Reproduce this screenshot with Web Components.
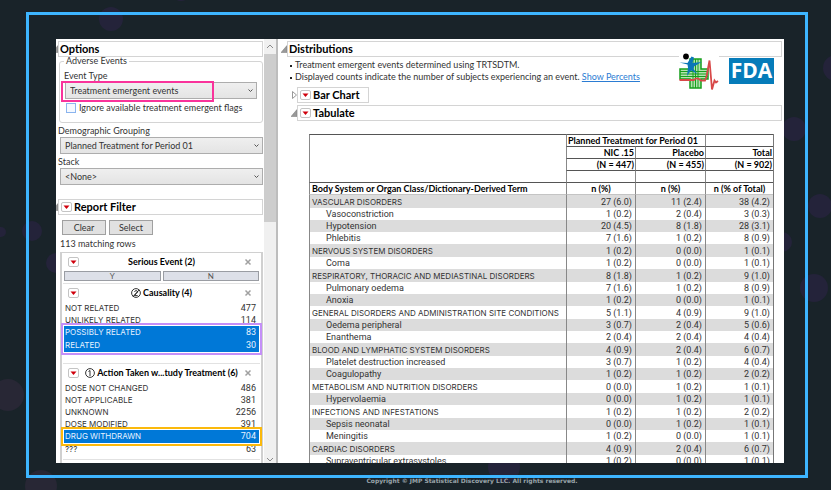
<!DOCTYPE html>
<html lang="en">
<head>
  <meta charset="UTF-8">
  <meta name="viewport" content="width=device-width, initial-scale=1.0">
  <title>Adverse Events Distributions</title>
  <style>
    body {
      margin: 0;
      font-family: Lato, "Open Sans", "Noto Sans", sans-serif;
      font-size: 9px;
      line-height: 12px;
      color: #333;
      --line: #d4d4d4;
      --accent: #0078d7;
      --caps-font: 8px/12px Inter, "Noto Sans", sans-serif;
      --data-font: Roboto, "Noto Sans", sans-serif;
    }
  </style>
</head>
<body>
  <slide-frame>
    <split-view>
      <side-bar slot="side">
        <outline-box>Options</outline-box>
        <group-box label="Adverse Events">
          <combo-box label="Event Type" value="Treatment emergent events" marked></combo-box>
          <check-box>Ignore available treatment emergent flags</check-box>
        </group-box>
        <combo-box label="Demographic Grouping" value="Planned Treatment for Period 01"></combo-box>
        <combo-box label="Stack" value="&lt;None&gt;"></combo-box>
        <report-filter></report-filter>
      </side-bar>
      <report-view>
        <tabulate-table></tabulate-table>
      </report-view>
    </split-view>
    <span slot="footer">Copyright © JMP Statistical Discovery LLC. All rights reserved.</span>
  </slide-frame>

  <script type="text/javascript">
    // small helper, every element here opens a shadow root the same way
    class BaseElement extends HTMLElement {
      constructor() {
        super();
        this._shadowRoot = this.attachShadow({ mode: 'open' });
      }

      connectedCallback() {
        this._shadowRoot.innerHTML = this.template();
      }
    }

    // dark page with the blue frame
    class SlideFrame extends BaseElement {
      template() {
        return `
        <style>
          :host {
            display: flex;
            flex-direction: column;
            position: relative;
            box-sizing: border-box;
            height: 100vh;
            padding: 12px 23px 0 26px;
            overflow: hidden;
            background: #192329;
          }

          .dots {
            position: absolute;
            inset: 0;
            width: 100%;
            height: 100%;
            fill: #24233a;
          }

          .frame {
            position: relative;
            display: flex;
            flex: 1;
            min-height: 0;
            padding: 24px 21px 12px 27px;
            border: 3px solid #3db5ff;
          }

          ::slotted(split-view) {
            flex: 1;
          }

          footer {
            position: relative;
            height: 12px;
            padding-left: 110px;
            text-align: center;
            font: bold 6px/5px "DejaVu Sans", sans-serif;
            color: #9aa4a9;
          }
        </style>

        <svg class="dots" viewBox="0 0 831 490" preserveAspectRatio="xMidYMid slice" aria-hidden="true">
          <circle cx="111" cy="19" r="12"/>
          <circle cx="181" cy="-9" r="10"/>
          <circle cx="1" cy="232" r="5"/>
          <circle cx="32" cy="231" r="10"/>
          <circle cx="56" cy="263" r="10"/>
          <circle cx="8" cy="395" r="16" fill="#282735"/>
          <circle cx="41" cy="486" r="16" fill="#282735"/>
          <circle cx="504" cy="467" r="16"/>
          <circle cx="836" cy="68" r="13"/>
          <circle cx="794" cy="129" r="12"/>
          <circle cx="820" cy="206" r="12"/>
          <circle cx="782" cy="242" r="10"/>
          <circle cx="814" cy="288" r="14"/>
        </svg>
        <div class="frame"><slot></slot></div>
        <footer><slot name="footer"></slot></footer>
        `;
      }
    }

    class SplitView extends BaseElement {
      template() {
        return `
        <style>
          :host {
            display: flex;
            min-width: 0;
            overflow: hidden;
            background: #fff;
          }

          ::slotted(side-bar) {
            flex: 0 0 220px;
            border-right: 2px solid #bdbdbd;
          }

          ::slotted(report-view) {
            flex: 1;
            min-width: 0;
          }
        </style>
        <slot name="side"></slot>
        <slot></slot>
        `;
      }
    }

    // left panel with its own scroll bar
    class SideBar extends BaseElement {
      template() {
        return `
        <style>
          :host {
            display: flex;
            overflow: hidden;
          }

          .content {
            flex: 1;
            min-width: 0;
            padding: 2px 1px 0 2px;
          }

          .scroll {
            display: flex;
            flex-direction: column;
            align-items: center;
            width: 12px;
            background: #f0f0f0;
          }

          .scroll svg {
            flex: none;
            width: 12px;
            height: 15px;
            fill: none;
            stroke: #8a8a8a;
          }

          .track {
            flex: 1;
            width: 12px;
          }

          .thumb {
            height: 42%;
            background: #cdcdcd;
          }

          .scroll .down {
            height: 8px;
          }

          ::slotted(combo-box) {
            margin: 0 0 1px 2px;
          }
        </style>
        <div class="content"><slot></slot></div>
        <div class="scroll" aria-hidden="true">
          <svg viewBox="0 0 12 15"><path d="M3 9l3-3 3 3"/></svg>
          <div class="track"><div class="thumb"></div></div>
          <svg class="down" viewBox="0 0 12 8"><path d="M3 3l3 3 3-3"/></svg>
        </div>
        `;
      }
    }

    // title bar with the disclosure triangle
    class OutlineBox extends BaseElement {
      template() {
        const icon = this.hasAttribute('closed')
          ? '<path d="M1.500 1.500v7l4-3.500z" fill="#fff" stroke="#999"/>'
          : '<path d="M0 8.500h6v-7z" fill="#999" stroke="#777" stroke-width=".5"/>';

        return `
        <style>
          :host {
            display: flex;
            align-items: center;
            position: relative;
            margin-left: -6px;
          }

          .toggle {
            flex: none;
            width: 6px;
            height: 10px;
          }

          .title {
            display: flex;
            flex: 1;
            align-items: center;
            gap: 2px;
            height: 14px;
            padding: 0 1px;
            border: 1px solid var(--line);
            background: #fff;
          }

          :host([menu]) .title {
            padding: 0 2px;
          }

          :host([fit]) .title {
            flex: none;
            padding-right: 8px;
          }

          h2 {
            margin: 0;
            font-size: 11px;
            line-height: 14px;
            color: #000;
          }
        </style>
        <svg class="toggle" viewBox="0 0 6 10" aria-hidden="true">${icon}</svg>
        <div class="title">
          ${this.hasAttribute('menu') ? '<menu-button></menu-button>' : ''}
          <h2><slot></slot></h2>
        </div>
        `;
      }
    }

    class MenuButton extends BaseElement {
      template() {
        return `
        <style>
          :host {
            display: block;
            flex: none;
          }

          button {
            display: block;
            width: 11px;
            height: 10px;
            padding: 0;
            border: 1px solid #c4c4c4;
            border-radius: 2px;
            background: #fff;
          }

          svg {
            display: block;
            width: 9px;
            height: 8px;
          }
        </style>
        <button aria-label="Menu">
          <svg viewBox="0 0 9 8"><path d="M1.500 2.500h6l-3 3.500z" fill="#d0000c"/></svg>
        </button>
        `;
      }
    }

    class GroupBox extends BaseElement {
      template() {
        return `
        <style>
          :host {
            display: block;
            margin: 0 0 1px 1px;
          }

          fieldset {
            box-sizing: border-box;
            min-width: 0;
            height: 66px;
            margin: 0;
            padding: 4px 5px 0 4px;
            border: 1px solid var(--line);
            border-radius: 3px;
          }

          legend {
            padding: 0 2px;
            line-height: 8px;
          }
        </style>
        <fieldset>
          <legend>${this.getAttribute('label')}</legend>
          <slot></slot>
        </fieldset>
        `;
      }
    }

    class ComboBox extends BaseElement {
      template() {
        return `
        <style>
          :host {
            display: block;
            position: relative;
          }

          label {
            display: block;
            margin-left: -2px;
            line-height: 13px;
          }

          :host([marked]) label {
            margin-left: 0;
          }

          .field {
            display: grid;
            position: relative;
            align-items: center;
          }

          :host([marked]) .field {
            margin-left: 1px;
          }

          select, svg {
            grid-area: 1 / 1;
          }

          select {
            appearance: none;
            box-sizing: border-box;
            width: 100%;
            height: 17px;
            padding: 0 4px;
            border: 1px solid #adadad;
            border-radius: 0;
            background: linear-gradient(#efefef, #e4e4e4);
            font: inherit;
            color: inherit;
          }

          svg {
            justify-self: end;
            width: 5px;
            height: 4px;
            margin-right: 4px;
            fill: none;
            stroke: #555;
            pointer-events: none;
          }

          /* pink callout over the first part of the field */
          :host([marked]) .field::after {
            content: "";
            position: absolute;
            inset: -1px 43px -3px -4px;
            border: 2px solid #f9339b;
          }
        </style>
        <label for="field">${this.getAttribute('label')}</label>
        <div class="field">
          <select id="field"><option></option></select>
          <svg viewBox="0 0 5 4" aria-hidden="true"><path d="M.5 .5l2 2 2-2"/></svg>
        </div>
        `;
      }

      connectedCallback() {
        super.connectedCallback();
        this._shadowRoot.querySelector('option').textContent = this.getAttribute('value');
      }
    }

    class CheckBox extends BaseElement {
      template() {
        return `
        <style>
          :host {
            display: block;
            margin-top: 3px;
          }

          label {
            display: flex;
            align-items: center;
            gap: 3px;
            padding-left: 2px;
          }

          input {
            appearance: none;
            box-sizing: border-box;
            flex: none;
            width: 10px;
            height: 10px;
            margin: 0;
            border: 1px solid #8ab4ee;
            background: #f5f9ff;
          }

          span {
            white-space: nowrap;
          }
        </style>
        <label><input type="checkbox"><span><slot></slot></span></label>
        `;
      }
    }

    class ReportFilter extends BaseElement {
      template() {
        return `
        <style>
          :host {
            display: block;
            margin-top: 14px;
          }

          .actions {
            display: flex;
            gap: 3px;
            padding: 5px 4px 3px;
          }

          .actions button {
            width: 44px;
            height: 15px;
            padding: 0;
            border: 1px solid #a0a0a0;
            background: #e1e1e1;
            font: inherit;
            color: inherit;
          }

          p {
            margin: 0 2px 2px;
          }

          .cards {
            margin: 0 0 0 2px;
            border: 2px solid #d0d0d0;
            border-top-width: 1px;
            border-bottom: 0;
          }
        </style>
        <outline-box menu>Report Filter</outline-box>
        <div class="actions">
          <button>Clear</button>
          <button>Select</button>
        </div>
        <p>113 matching rows</p>
        <div class="cards">
          <filter-card label="Serious Event (2)">
            <toggle-pair></toggle-pair>
          </filter-card>
          <filter-card label="Causality (4)" order="2">
            <filter-list roomy mark="#c48ff8" rows="NOT RELATED:477,UNLIKELY RELATED:114,*POSSIBLY RELATED:83,*RELATED:30"></filter-list>
          </filter-card>
          <filter-card label="Action Taken w...tudy Treatment (6)" order="1">
            <filter-list mark="#fbb90c" rows="DOSE NOT CHANGED:486,NOT APPLICABLE:381,UNKNOWN:2256,DOSE MODIFIED:391,*DRUG WITHDRAWN:704,???:63"></filter-list>
          </filter-card>
          <filter-card label=""></filter-card>
        </div>
        `;
      }
    }

    class FilterCard extends BaseElement {
      template() {
        const order = this.getAttribute('order');
        const marks = {
          1: '<path d="M3.500 3.500L5 2.500v5.500"/>',
          2: '<path d="M3.500 3.800c.4-1.600 3-1.500 3 0 0 1.200-2.600 2.600-3 3.800h3.200M2 8.500L8.300 1.800"/>'
        };

        return `
        <style>
          :host {
            display: block;
            margin: 0 1px;
            border-bottom: 1px solid #e2e2e2;
          }

          header {
            display: grid;
            grid-template-columns: 11px 1fr 8px;
            align-items: center;
            height: 18px;
            padding: 0 8px 0 5px;
            white-space: nowrap;
          }

          h3 {
            display: flex;
            justify-content: center;
            align-items: center;
            gap: 2px;
            margin: 0;
            font-size: 9px;
            color: #000;
          }

          h3 svg {
            width: 10px;
            height: 10px;
            fill: none;
            stroke: #000;
            stroke-width: .8;
          }

          .close {
            display: block;
            width: 8px;
            height: 8px;
            padding: 0;
            border: 0;
            background: none;
          }

          .close svg {
            display: block;
            stroke: #a0a0a0;
            stroke-width: 1.5;
          }
        </style>
        <header>
          <menu-button></menu-button>
          <h3>
            ${order ? `<svg viewBox="0 0 10 10" aria-hidden="true"><circle cx="5" cy="5" r="4.400"/>${marks[order]}</svg>` : ''}
            <span>${this.getAttribute('label')}</span>
          </h3>
          <button class="close" aria-label="Remove"><svg viewBox="0 0 8 8"><path d="M1.500 1.500l5 5m0-5l-5 5"/></svg></button>
        </header>
        <slot></slot>
        `;
      }
    }

    class TogglePair extends BaseElement {
      template() {
        return `
        <style>
          :host {
            display: grid;
            grid-template-columns: 1fr 1fr;
            gap: 2px;
            padding: 0 1px 2px;
          }

          button {
            height: 10px;
            padding: 0;
            border: 1px solid #9a9da3;
            background: #dde0e8;
            font: inherit;
            font-size: 8px;
            line-height: 8px;
            color: #555;
          }
        </style>
        <button>Y</button>
        <button>N</button>
        `;
      }
    }

    // rows are "LABEL:count", a leading star marks a selected row
    class FilterList extends BaseElement {
      template() {
        const rows = this.getAttribute('rows').split(',');
        const item = (row) => {
          const [label, count] = row.replace('*', '').split(':');
          return `<div class="row" role="option" aria-selected="${row[0] === '*'}"><span class="label">${label}</span><span>${count}</span></div>`;
        };
        const first = rows.findIndex((row) => row[0] === '*');
        const picked = rows.filter((row) => row[0] === '*');

        return `
        <style>
          :host {
            display: block;
            padding: 0 1px 4px;
            font-family: var(--data-font);
          }

          :host([roomy]) {
            padding-bottom: 11px;
          }

          .row {
            display: flex;
            justify-content: space-between;
            height: 12px;
            padding: 0 3px 0 1px;
          }

          .label {
            font: var(--caps-font);
          }

          .picked {
            position: relative;
            background: var(--accent);
            color: #e6f2ff;
          }

          .picked .row {
            height: 13px;
          }

          /* callout round the selected rows */
          .picked::after {
            content: "";
            position: absolute;
            inset: -3px;
            border: 2px solid ${this.getAttribute('mark')};
          }
        </style>
        <div role="listbox">
          ${rows.slice(0, first).map(item).join('')}
          <div class="picked" role="group">${picked.map(item).join('')}</div>
          ${rows.slice(first + picked.length).map(item).join('')}
        </div>
        `;
      }
    }

    class ReportView extends BaseElement {
      template() {
        return `
        <style>
          :host {
            display: block;
            position: relative;
            padding: 2px 2px 0 9px;
            overflow: hidden;
          }

          ul {
            margin: 2px 0 4px 3px;
            padding: 0;
            list-style: none;
          }

          li::before {
            content: "";
            display: inline-block;
            width: 2px;
            height: 2px;
            margin-right: 3px;
            vertical-align: middle;
            background: #222;
          }

          a {
            color: #2b7cd3;
          }

          .nested {
            display: grid;
            gap: 2px;
            margin-left: 10px;
          }

          .logos {
            display: flex;
            align-items: flex-start;
            gap: 10px;
            position: absolute;
            top: 14px;
            right: 10px;
          }

          .health {
            width: 40px;
            height: 38px;
            background: #fff;
          }

          .fda {
            width: 45px;
            height: 26px;
            margin-top: 5px;
            background: #067cba;
            color: #fff;
            text-align: center;
            font-family: "Open Sans", sans-serif;
            font-size: 21px;
            font-weight: 700;
            line-height: 25px;
          }
        </style>
        <outline-box>Distributions</outline-box>
        <ul>
          <li>Treatment emergent events determined using TRTSDTM.</li>
          <li>Displayed counts indicate the number of subjects experiencing an event. <a href="#percents">Show Percents</a></li>
        </ul>
        <div class="logos">
          <svg class="health" viewBox="0 0 40 38" role="img" aria-label="Health">
            <path d="M11 6h11v10h7v10h-7v9h-11v-9h-10v-10h10z" fill="#b4e2b0" stroke="#16a01c" stroke-width="1.500"/>
            <path d="M14 6v29M16.500 6v29M19 6v29M1 18.500h28M1 21h28M1 23.500h28" fill="none" stroke="#16a01c"/>
            <path d="M0.500 9.500l8 .5 4-6.500 2.500 1-1.500 5.500 9-1-7.500 4.500-.5 2.500 4 5-6.500-3.500-4 5.500 1-8.500-.5-3z" fill="#0b76b8"/>
            <circle cx="7" cy="3.500" r="2.900" fill="#000"/>
            <path d="M.5 27h14.500q2-2.500 5-1l2 1.500h4l1.500-4 3-16 2.500 29 2.500-9 1.500 2 2-1.500" fill="none" stroke="#d84848" stroke-width="1.800"/>
          </svg>
          <div class="fda">FDA</div>
        </div>
        <div class="nested">
          <outline-box closed menu fit>Bar Chart</outline-box>
          <outline-box menu>Tabulate</outline-box>
        </div>
        <slot></slot>
        `;
      }
    }

    class TabulateTable extends BaseElement {
      // a dash in front makes the row an indented term
      get rows() {
        return [
          ['VASCULAR DISORDERS', '27 (6.0)', '11 (2.4)', '38 (4.2)'],
          ['-Vasoconstriction', '1 (0.2)', '2 (0.4)', '3 (0.3)'],
          ['-Hypotension', '20 (4.5)', '8 (1.8)', '28 (3.1)'],
          ['-Phlebitis', '7 (1.6)', '1 (0.2)', '8 (0.9)'],
          ['NERVOUS SYSTEM DISORDERS', '1 (0.2)', '0 (0.0)', '1 (0.1)'],
          ['-Coma', '1 (0.2)', '0 (0.0)', '1 (0.1)'],
          ['RESPIRATORY, THORACIC AND MEDIASTINAL DISORDERS', '8 (1.8)', '1 (0.2)', '9 (1.0)'],
          ['-Pulmonary oedema', '7 (1.6)', '1 (0.2)', '8 (0.9)'],
          ['-Anoxia', '1 (0.2)', '0 (0.0)', '1 (0.1)'],
          ['GENERAL DISORDERS AND ADMINISTRATION SITE CONDITIONS', '5 (1.1)', '4 (0.9)', '9 (1.0)'],
          ['-Oedema peripheral', '3 (0.7)', '2 (0.4)', '5 (0.6)'],
          ['-Enanthema', '2 (0.4)', '2 (0.4)', '4 (0.4)'],
          ['BLOOD AND LYMPHATIC SYSTEM DISORDERS', '4 (0.9)', '2 (0.4)', '6 (0.7)'],
          ['-Platelet destruction increased', '3 (0.7)', '1 (0.2)', '4 (0.4)'],
          ['-Coagulopathy', '1 (0.2)', '1 (0.2)', '2 (0.2)'],
          ['METABOLISM AND NUTRITION DISORDERS', '0 (0.0)', '1 (0.2)', '1 (0.1)'],
          ['-Hypervolaemia', '0 (0.0)', '1 (0.2)', '1 (0.1)'],
          ['INFECTIONS AND INFESTATIONS', '1 (0.2)', '1 (0.2)', '2 (0.2)'],
          ['-Sepsis neonatal', '0 (0.0)', '1 (0.2)', '1 (0.1)'],
          ['-Meningitis', '1 (0.2)', '0 (0.0)', '1 (0.1)'],
          ['CARDIAC DISORDERS', '4 (0.9)', '2 (0.4)', '6 (0.7)'],
          ['-Supraventricular extrasystoles', '1 (0.2)', '0 (0.0)', '1 (0.1)']
        ];
      }

      template() {
        const body = this.rows.map(([term, ...counts]) => `
          <tr class="${term[0] === '-' ? 'term' : 'group'}">
            <td>${term.replace(/^-/, '')}</td>
            ${counts.map((count) => `<td>${count}</td>`).join('')}
          </tr>`).join('');

        return `
        <style>
          :host {
            display: block;
            padding: 13px 8px 0 22px;
          }

          table {
            width: 100%;
            table-layout: fixed;
            border-spacing: 0;
            border-right: 1px solid #777;
          }

          th, td {
            height: 12px;
            padding: 0 3px 0 0;
            border-left: 1px solid #888;
            line-height: 12px;
            text-align: right;
            white-space: nowrap;
          }

          th {
            height: 11px;
            padding: 0 1px;
            border-top: 1px solid #555;
            line-height: 11px;
            color: #000;
          }

          th.span {
            text-align: left;
          }

          .labels th {
            border-bottom: 1px solid #c4c4c4;
            text-align: center;
          }

          tbody {
            font-family: var(--data-font);
          }

          td:first-child, .labels th:first-child {
            padding-left: 2px;
            text-align: left;
          }

          .group td {
            height: 13px;
          }

          .group td:first-child {
            font: var(--caps-font);
          }

          .term td:first-child {
            padding-left: 16px;
          }

          tbody tr:nth-child(odd) {
            background: #dcdcdc;
          }
        </style>
        <table>
          <colgroup><col><col width="69"><col width="70"><col width="68"></colgroup>
          <thead>
            <tr><th rowspan="4"></th><th class="span" colspan="2">Planned Treatment for Period 01</th><th></th></tr>
            <tr><th>NIC .15</th><th>Placebo</th><th>Total</th></tr>
            <tr><th>(N = 447)</th><th>(N = 455)</th><th>(N = 902)</th></tr>
            <tr><th></th><th></th><th></th></tr>
            <tr class="labels"><th>Body System or Organ Class/Dictionary-Derived Term</th><th>n (%)</th><th>n (%)</th><th>n (% of Total)</th></tr>
          </thead>
          <tbody>${body}</tbody>
        </table>
        `;
      }
    }

    window.customElements.define('slide-frame', SlideFrame);
    window.customElements.define('split-view', SplitView);
    window.customElements.define('side-bar', SideBar);
    window.customElements.define('outline-box', OutlineBox);
    window.customElements.define('menu-button', MenuButton);
    window.customElements.define('group-box', GroupBox);
    window.customElements.define('combo-box', ComboBox);
    window.customElements.define('check-box', CheckBox);
    window.customElements.define('report-filter', ReportFilter);
    window.customElements.define('filter-card', FilterCard);
    window.customElements.define('toggle-pair', TogglePair);
    window.customElements.define('filter-list', FilterList);
    window.customElements.define('report-view', ReportView);
    window.customElements.define('tabulate-table', TabulateTable);
  </script>
</body>
</html>
